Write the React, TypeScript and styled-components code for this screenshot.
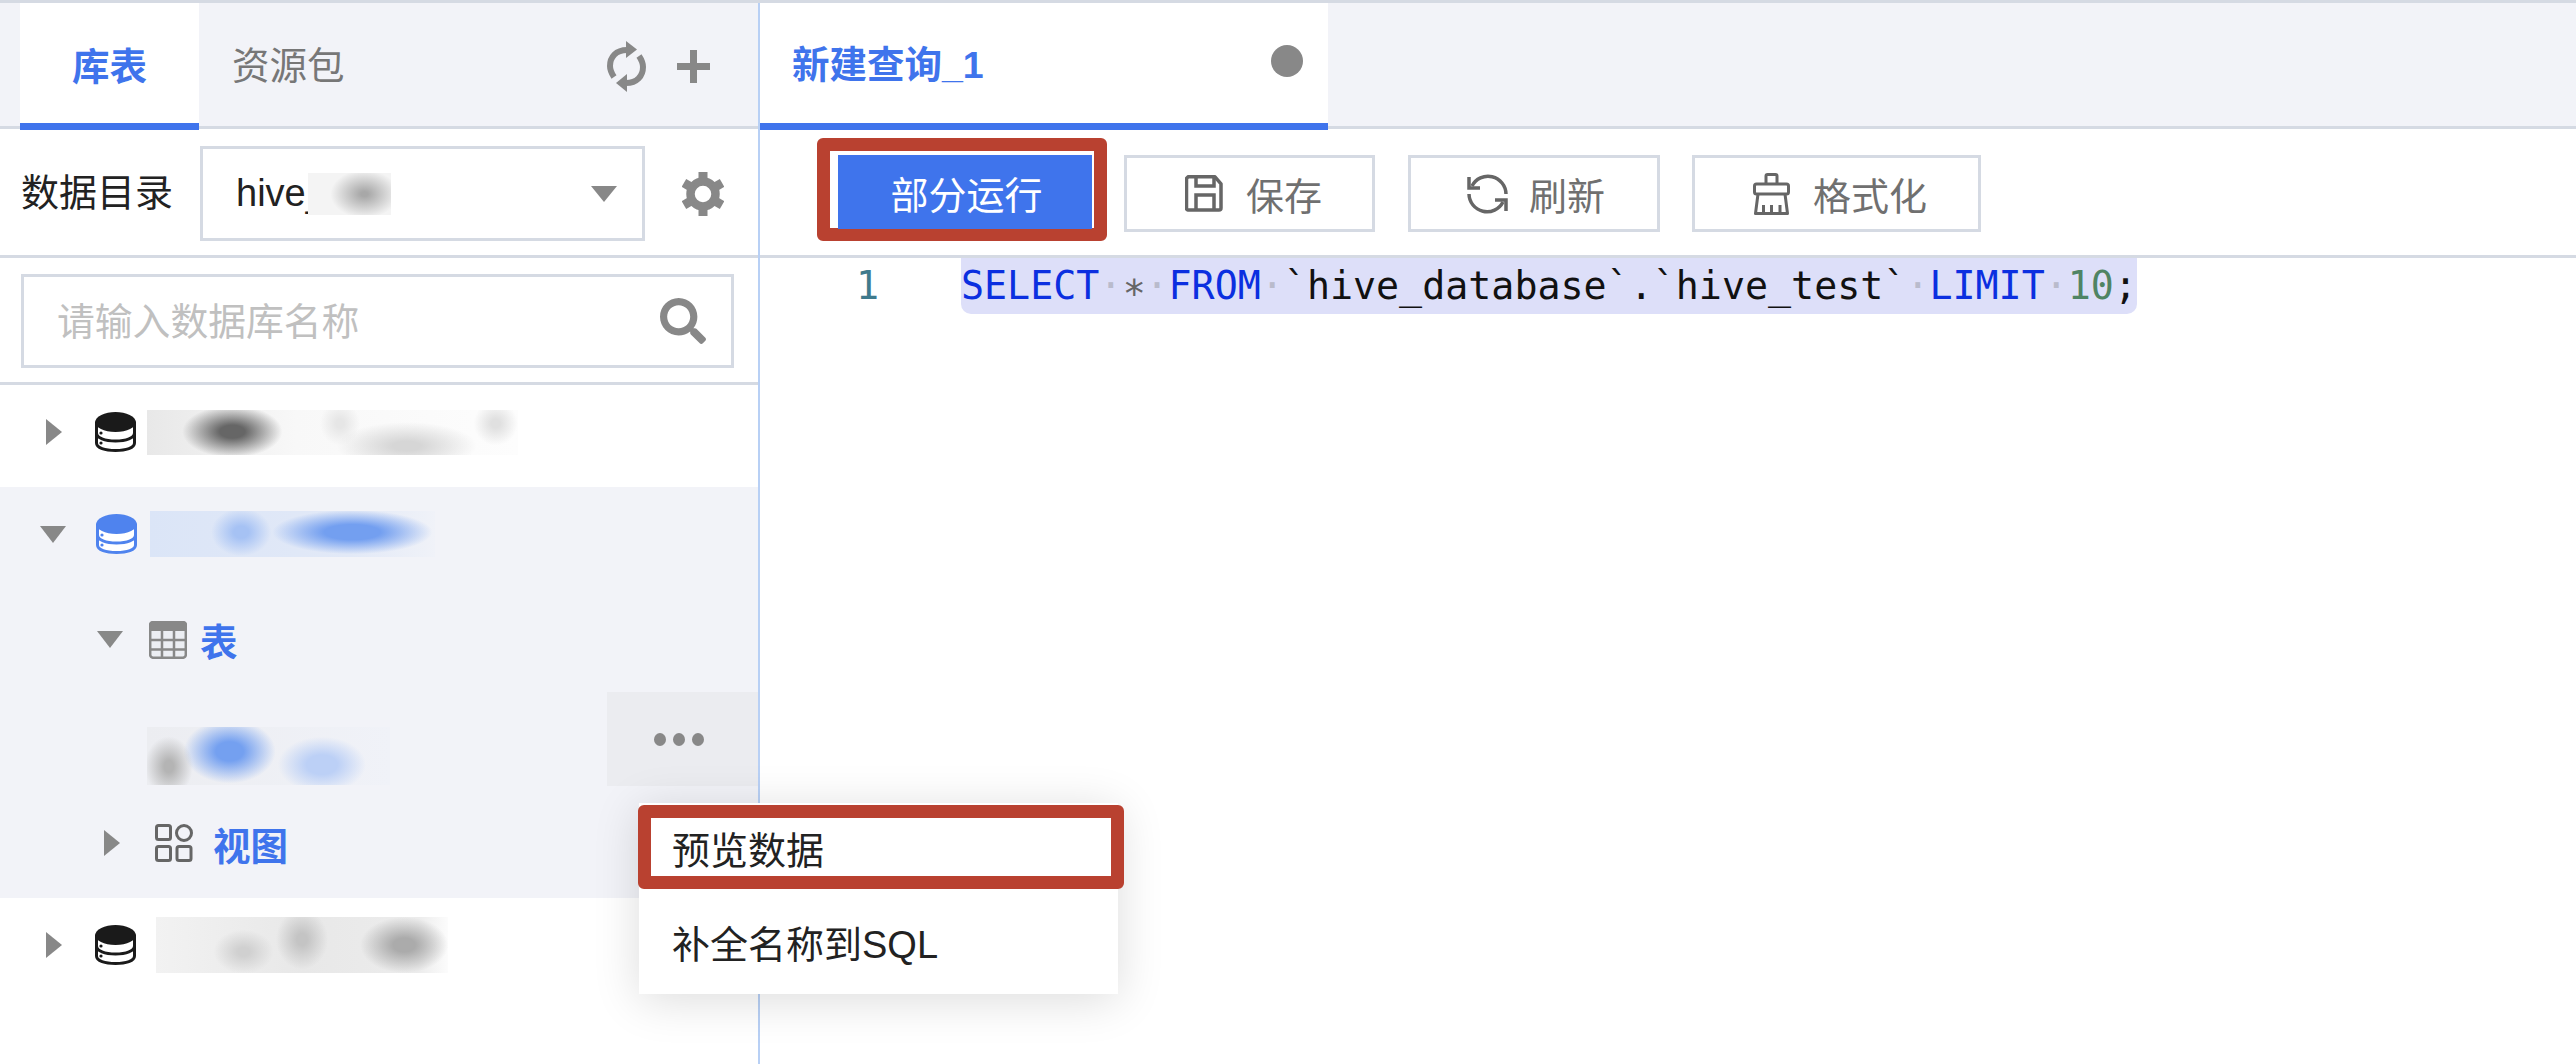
import React from "react";
import styled, { createGlobalStyle } from "styled-components";
import { FaSearch } from "react-icons/fa";

const blue = "#3f74ec";
const line = "#d5dae3";
const paneBg = "#f2f3f8";
const red = "#b94130";
const iconGray = "#888888";

const GlobalStyle = createGlobalStyle`
  html, body { margin: 0; padding: 0; background: #fff; }
  * { box-sizing: border-box; }
`;

function DbIcon({ color }: { color: string }) {
  return (
    <svg width="41" height="40" viewBox="0 0 41 40">
      <path
        d="M1.5 11V31C1.5 36 10 38.5 20.5 38.5S39.5 36 39.5 31V11z"
        fill="#fff"
        stroke={color}
        strokeWidth="3"
      />
      <path d="M1.5 21C1.5 26 10 29 20.5 29S39.5 26 39.5 21" fill="none" stroke={color} strokeWidth="3" />
      <path d="M0 11C0 4 10 0 20.5 0S41 4 41 11C41 15 32 20 20.5 20S0 15 0 11z" fill={color} />
      <circle cx="6" cy="21" r="1.6" fill={color} />
      <circle cx="6" cy="31" r="1.6" fill={color} />
    </svg>
  );
}

function TableIcon() {
  return (
    <svg width="38" height="38" viewBox="0 0 38 38" fill="none" stroke={iconGray} strokeWidth="2.5">
      <rect x="1.2" y="1.2" width="35.6" height="35.6" rx="3" fill="#eceef3" />
      <path d="M0 4a4 4 0 0 1 4-4h30a4 4 0 0 1 4 4v6H0z" fill={iconGray} stroke="none" />
      <path d="M1 19h36M1 28.500h36M13 10v27M25 10v27" />
    </svg>
  );
}

function ViewIcon() {
  return (
    <svg width="38" height="38" viewBox="0 0 38 38" fill="none" stroke="#666" strokeWidth="3">
      <rect x="1.500" y="1.500" width="14" height="14" rx="2" />
      <circle cx="29" cy="9" r="7.500" />
      <rect x="1.500" y="22.500" width="14" height="14" rx="2" />
      <rect x="22" y="22.500" width="14" height="14" rx="2" />
    </svg>
  );
}

function SyncIcon() {
  return (
    <svg width="39" height="51" viewBox="0 0 39 51">
      <path d="M20 9C9 9 3 16 3 25C3 30 5 33 7 36" fill="none" stroke={iconGray} strokeWidth="6" />
      <path d="M19 42C30 42 36 35 36 26C36 21 34 18 32 15" fill="none" stroke={iconGray} strokeWidth="6" />
      <path d="M19 0L30 8.500L19 17z" fill={iconGray} />
      <path d="M20 33L9 42L20 51z" fill={iconGray} />
    </svg>
  );
}

function GearIcon() {
  return (
    <svg width="42" height="44" viewBox="0 0 42 44" fill={iconGray}>
      <circle cx="21" cy="22" r="12.500" fill="none" stroke={iconGray} strokeWidth="8.500" />
      {[0, 60, 120, 180, 240, 300].map((deg) => (
        <rect key={deg} x="16.500" y="0" width="9" height="10" transform={`rotate(${deg} 21 22)`} />
      ))}
    </svg>
  );
}

function SaveIcon() {
  return (
    <svg width="38" height="37" viewBox="0 0 38 37" fill="none" stroke="#666" strokeWidth="3.500">
      <path d="M3 1.800h27l6 7V33a2 2 0 0 1-2 2H3a2 2 0 0 1-1.500-2V3.500z" strokeLinejoin="round" />
      <path d="M11 2v9h18V2M11 35V20h18v15" />
    </svg>
  );
}

function RefreshIcon() {
  return (
    <svg width="41" height="40" viewBox="0 0 41 40" fill="none" stroke="#666" strokeWidth="3.500">
      <path d="M39 20A18 18 0 0 0 5 12" />
      <path d="M2 20A18 18 0 0 0 36 28" />
      <path d="M2 3V14H13M39 37V26H28" />
    </svg>
  );
}

function BroomIcon() {
  return (
    <svg width="37" height="42" viewBox="0 0 37 42" fill="none" stroke="#666" strokeWidth="3">
      <path d="M13 11V3a1.500 1.500 0 0 1 1.500-1.500h8A1.500 1.500 0 0 1 24 3v8" />
      <rect x="1.500" y="11" width="34" height="10" rx="2" />
      <path d="M5 21L2.500 40.500H34.500L32 21" strokeLinejoin="round" />
      <path d="M10.500 40V32M18.500 40V32M27 40V32" />
    </svg>
  );
}

export default function App() {
  return (
    <>
      <GlobalStyle />
      <Page>
        <LeftPane>
          <TabBar>
            <SideTab $active>库表</SideTab>
            <SideTab>资源包</SideTab>
            <TabActions>
              <SyncIcon />
              <PlusSign />
            </TabActions>
          </TabBar>
          <CatalogRow>
            <CatalogLabel>数据目录</CatalogLabel>
            <CatalogSelect>
              <span>hive_</span>
              <Smudge
                $left={-19}
                $w={83}
                $h={42}
                $bg="radial-gradient(ellipse 34px 24px at 68% 50%, #a8a8a8 10%, #f4f4f4 100%)"
              />
              <SelectCaret />
            </CatalogSelect>
            <GearSlot>
              <GearIcon />
            </GearSlot>
          </CatalogRow>
          <SearchRow>
            <SearchBox>
              <SearchHint>请输入数据库名称</SearchHint>
              <FaSearch />
            </SearchBox>
          </SearchRow>
          <Tree>
            <TreeRow $height={102} $pad={46} $bottom={8}>
              <CaretRight />
              <IconSlot $left={33}>
                <DbIcon color="#1a1a1a" />
              </IconSlot>
              <Smudge
                $left={11}
                $w={371}
                $h={45}
                $bg="radial-gradient(ellipse 50px 26px at 23% 48%, #666 25%, transparent 100%), radial-gradient(ellipse 70px 24px at 70% 80%, #d6d6d6 20%, transparent 100%), radial-gradient(ellipse 22px 22px at 94% 30%, #e0e0e0 20%, transparent 100%), radial-gradient(ellipse 20px 22px at 52% 30%, #e6e6e6 20%, transparent 100%), linear-gradient(90deg, #e8e8e8, #f8f8f8 40%, #fdfdfd)"
              />
            </TreeRow>
            <TreeRow $height={100} $pad={40} $bottom={6} $open>
              <CaretDown />
              <IconSlot $left={30}>
                <DbIcon color="#4f83ee" />
              </IconSlot>
              <Smudge
                $left={13}
                $w={285}
                $h={46}
                $bg="radial-gradient(ellipse 80px 22px at 71% 46%, #739ff0 35%, transparent 100%), radial-gradient(ellipse 30px 24px at 32% 46%, #a6c2f4 25%, transparent 100%), linear-gradient(90deg, #dbe5f7, #e2e9f7 70%, #f0f2f8)"
              />
            </TreeRow>
            <TreeRow $height={105} $pad={97} $open>
              <CaretDown />
              <IconSlot $left={26}>
                <TableIcon />
              </IconSlot>
              <NodeName $left={13}>表</NodeName>
            </TreeRow>
            <TreeRow $height={100} $pad={147} $open>
              <Smudge
                $w={243}
                $h={58}
                $top={28}
                $bg="radial-gradient(ellipse 24px 30px at 9% 68%, #b4b4b4 20%, transparent 100%), radial-gradient(ellipse 46px 32px at 34% 42%, #74a0f0 30%, transparent 100%), radial-gradient(ellipse 44px 28px at 72% 65%, #bcd0f6 35%, transparent 100%), linear-gradient(90deg, #ecedf1, #f0f2f8)"
              />
              <MoreButton>
                <MoreDot />
                <MoreDot />
                <MoreDot />
              </MoreButton>
            </TreeRow>
            <TreeRow $height={106} $pad={104} $bottom={4} $open>
              <CaretRight />
              <IconSlot $left={35}>
                <ViewIcon />
              </IconSlot>
              <NodeName $left={20}>视图</NodeName>
            </TreeRow>
            <TreeRow $height={102} $pad={46} $bottom={8}>
              <CaretRight />
              <IconSlot $left={33}>
                <DbIcon color="#1a1a1a" />
              </IconSlot>
              <Smudge
                $left={20}
                $w={292}
                $h={56}
                $bg="radial-gradient(ellipse 44px 28px at 85% 50%, #ababab 25%, transparent 100%), radial-gradient(ellipse 26px 30px at 50% 40%, #c4c4c4 20%, transparent 100%), radial-gradient(ellipse 30px 22px at 30% 62%, #d0d0d0 20%, transparent 100%), linear-gradient(90deg, #f2f2f2, #e8e8e8 50%, #ececec 90%, #fcfcfc)"
              />
            </TreeRow>
          </Tree>
        </LeftPane>

        <RightPane>
          <QueryTabBar>
            <QueryTab>
              <QueryTitle>新建查询_1</QueryTitle>
              <UnsavedDot />
            </QueryTab>
          </QueryTabBar>
          <Toolbar>
            <RunFrame>
              <RunButton>部分运行</RunButton>
            </RunFrame>
            <ToolButton $width={251} $pad={58} $gap={23} $left={17}>
              <SaveIcon />
              保存
            </ToolButton>
            <ToolButton $width={252} $pad={56} $gap={21} $left={33}>
              <RefreshIcon />
              刷新
            </ToolButton>
            <ToolButton $width={289} $pad={58} $gap={23} $left={32}>
              <BroomIcon />
              格式化
            </ToolButton>
          </Toolbar>
          <Editor>
            <LineNo>1</LineNo>
            <CodeLine>
              <Kw>SELECT</Kw>
              <Ws>·</Ws>
              <Star>∗</Star>
              <Ws>·</Ws>
              <Kw>FROM</Kw>
              <Ws>·</Ws>
              `hive_database`.`hive_test`
              <Ws>·</Ws>
              <Kw>LIMIT</Kw>
              <Ws>·</Ws>
              <Num>10</Num>;
            </CodeLine>
          </Editor>
        </RightPane>

        <ContextMenu>
          <MenuItem $marked>预览数据</MenuItem>
          <MenuItem>补全名称到SQL</MenuItem>
        </ContextMenu>
      </Page>
    </>
  );
}

const Page = styled.div`
  position: relative;
  display: flex;
  width: 2576px;
  height: 1064px;
  overflow: hidden;
  background: #fff;
  border-top: 3px solid ${line};
  font-family: "Liberation Sans", "Noto Sans CJK SC", sans-serif;
`;

const LeftPane = styled.div`
  width: 760px;
  flex: none;
  display: flex;
  flex-direction: column;
  border-right: 2px solid #b8d0f5;
`;

const TabBar = styled.div`
  height: 126px;
  flex: none;
  display: flex;
  padding-left: 20px;
  background: ${paneBg};
  border-bottom: 3px solid ${line};
`;

const SideTab = styled.div<{ $active?: boolean }>`
  width: ${(p) => (p.$active ? "179px" : "auto")};
  height: 127px;
  padding: ${(p) => (p.$active ? "0" : "0 0 8px 33px")};
  display: flex;
  align-items: center;
  justify-content: center;
  font-size: 37.5px;
  font-weight: ${(p) => (p.$active ? 700 : 400)};
  color: ${(p) => (p.$active ? blue : "#777")};
  background: ${(p) => (p.$active ? "#fff" : "transparent")};
  border-bottom: ${(p) => (p.$active ? `7px solid ${blue}` : "none")};
`;

const TabActions = styled.div`
  margin-left: auto;
  padding: 3px 48px 0 0;
  display: flex;
  align-items: center;
  gap: 31px;
  height: 123px;
`;

const PlusSign = styled.div`
  width: 33px;
  height: 33px;
  background:
    linear-gradient(${iconGray}, ${iconGray}) center / 100% 7px no-repeat,
    linear-gradient(${iconGray}, ${iconGray}) center / 7px 100% no-repeat;
`;

const CatalogRow = styled.div`
  height: 129px;
  flex: none;
  display: flex;
  padding: 17px 0 0 21px;
  border-bottom: 3px solid ${line};
`;

const CatalogLabel = styled.div`
  width: 179px;
  height: 95px;
  line-height: 94px;
  font-size: 38px;
  color: #222;
`;

const CatalogSelect = styled.div`
  width: 445px;
  height: 95px;
  display: flex;
  align-items: center;
  padding-left: 33px;
  border: 3px solid ${line};
  font-size: 38px;
  color: #222;
`;

const Smudge = styled.div<{ $w: number; $h: number; $bg: string; $left?: number; $top?: number }>`
  width: ${(p) => p.$w}px;
  height: ${(p) => p.$h}px;
  margin-left: ${(p) => p.$left ?? 0}px;
  margin-top: ${(p) => p.$top ?? 0}px;
  flex: none;
  background: ${(p) => p.$bg};
`;

const SelectCaret = styled.div`
  margin-left: auto;
  margin-right: 25px;
  width: 0;
  height: 0;
  border-left: 13px solid transparent;
  border-right: 13px solid transparent;
  border-top: 16px solid ${iconGray};
`;

const GearSlot = styled.div`
  margin-left: 37px;
  height: 95px;
  display: flex;
  align-items: center;
`;

const SearchRow = styled.div`
  height: 127px;
  flex: none;
  padding: 16px 0 0 21px;
  border-bottom: 3px solid ${line};
`;

const SearchBox = styled.div`
  width: 713px;
  height: 94px;
  display: flex;
  align-items: center;
  justify-content: space-between;
  padding: 0 25px 0 33px;
  border: 3px solid ${line};
  font-size: 46px;
  color: ${iconGray};
`;

const SearchHint = styled.span`
  margin-bottom: 6px;
  font-size: 37.8px;
  color: #c0c0c0;
`;

const Tree = styled.div`
  display: flex;
  flex-direction: column;
`;

const TreeRow = styled.div<{ $height: number; $pad: number; $bottom?: number; $open?: boolean }>`
  position: relative;
  height: ${(p) => p.$height}px;
  display: flex;
  align-items: center;
  padding-left: ${(p) => p.$pad}px;
  padding-bottom: ${(p) => p.$bottom ?? 0}px;
  background: ${(p) => (p.$open ? paneBg : "#fff")};
`;

const CaretRight = styled.div`
  width: 0;
  height: 0;
  flex: none;
  border-top: 13px solid transparent;
  border-bottom: 13px solid transparent;
  border-left: 16px solid ${iconGray};
`;

const CaretDown = styled.div`
  width: 0;
  height: 0;
  flex: none;
  border-left: 13px solid transparent;
  border-right: 13px solid transparent;
  border-top: 17px solid ${iconGray};
`;

const IconSlot = styled.div<{ $left: number }>`
  display: flex;
  flex: none;
  margin-left: ${(p) => p.$left}px;
`;

const NodeName = styled.div<{ $left: number }>`
  margin-left: ${(p) => p.$left}px;
  font-size: 37.5px;
  font-weight: 700;
  color: ${blue};
`;

const MoreButton = styled.div`
  position: absolute;
  top: 0;
  right: 0;
  width: 151px;
  height: 94px;
  display: flex;
  align-items: center;
  justify-content: center;
  gap: 7px;
  padding-right: 8px;
  background: #ebecf0;
`;

const MoreDot = styled.span`
  width: 12px;
  height: 13px;
  border-radius: 50%;
  background: ${iconGray};
`;

const RightPane = styled.div`
  flex: 1;
  display: flex;
  flex-direction: column;
`;

const QueryTabBar = styled.div`
  height: 126px;
  flex: none;
  background: ${paneBg};
  border-bottom: 3px solid ${line};
`;

const QueryTab = styled.div`
  width: 568px;
  height: 127px;
  display: flex;
  align-items: center;
  justify-content: space-between;
  padding: 0 25px 4px 32px;
  background: #fff;
  border-bottom: 7px solid ${blue};
`;

const QueryTitle = styled.span`
  font-size: 37.5px;
  font-weight: 700;
  color: ${blue};
`;

const UnsavedDot = styled.span`
  width: 32px;
  height: 32px;
  border-radius: 50%;
  background: ${iconGray};
`;

const Toolbar = styled.div`
  height: 129px;
  flex: none;
  display: flex;
  align-items: flex-start;
  padding: 9px 0 0 57px;
  border-bottom: 3px solid ${line};
`;

const RunFrame = styled.div`
  width: 290px;
  height: 103px;
  padding: 4px 2px 0 8px;
  background: #fff;
  border: 13px solid ${red};
  border-radius: 6px;
`;

const RunButton = styled.div`
  height: 74px;
  display: flex;
  align-items: center;
  justify-content: center;
  padding-left: 3px;
  font-size: 38px;
  color: #fff;
  background: ${blue};
`;

const ToolButton = styled.div<{ $width: number; $pad: number; $gap: number; $left: number }>`
  width: ${(p) => p.$width}px;
  height: 77px;
  margin: 17px 0 0 ${(p) => p.$left}px;
  display: flex;
  align-items: center;
  gap: ${(p) => p.$gap}px;
  padding-left: ${(p) => p.$pad}px;
  font-size: 38px;
  color: #707070;
  border: 3px solid ${line};
`;

const Editor = styled.div`
  display: flex;
  font-family: "DejaVu Sans Mono", monospace;
  font-size: 38.3px;
  line-height: 56px;
`;

const LineNo = styled.div`
  width: 201px;
  padding-left: 96px;
  color: #3f7a8c;
`;

const CodeLine = styled.div`
  height: 56px;
  white-space: nowrap;
  color: #111;
  background: #dddff9;
  border-radius: 0 0 10px 10px;
`;

const Kw = styled.span`
  color: #0b2fe0;
`;

const Num = styled.span`
  color: #4f8464;
`;

const Ws = styled.span`
  color: #b9bbcc;
`;

const Star = styled.span`
  color: #666;
`;

const ContextMenu = styled.div`
  position: absolute;
  left: 639px;
  top: 800px;
  width: 479px;
  height: 191px;
  padding-top: 2px;
  background: #fff;
  box-shadow: 0 6px 44px rgba(0, 0, 0, 0.14);
`;

const MenuItem = styled.div<{ $marked?: boolean }>`
  height: ${(p) => (p.$marked ? 84 : 105)}px;
  margin: ${(p) => (p.$marked ? "0 -6px 0 -1px" : "0")};
  display: flex;
  align-items: center;
  padding-left: ${(p) => (p.$marked ? 21 : 33)}px;
  font-size: 38px;
  color: #222;
  border: ${(p) => (p.$marked ? `13px solid ${red}` : "none")};
  border-radius: ${(p) => (p.$marked ? "6px" : "0")};
`;
